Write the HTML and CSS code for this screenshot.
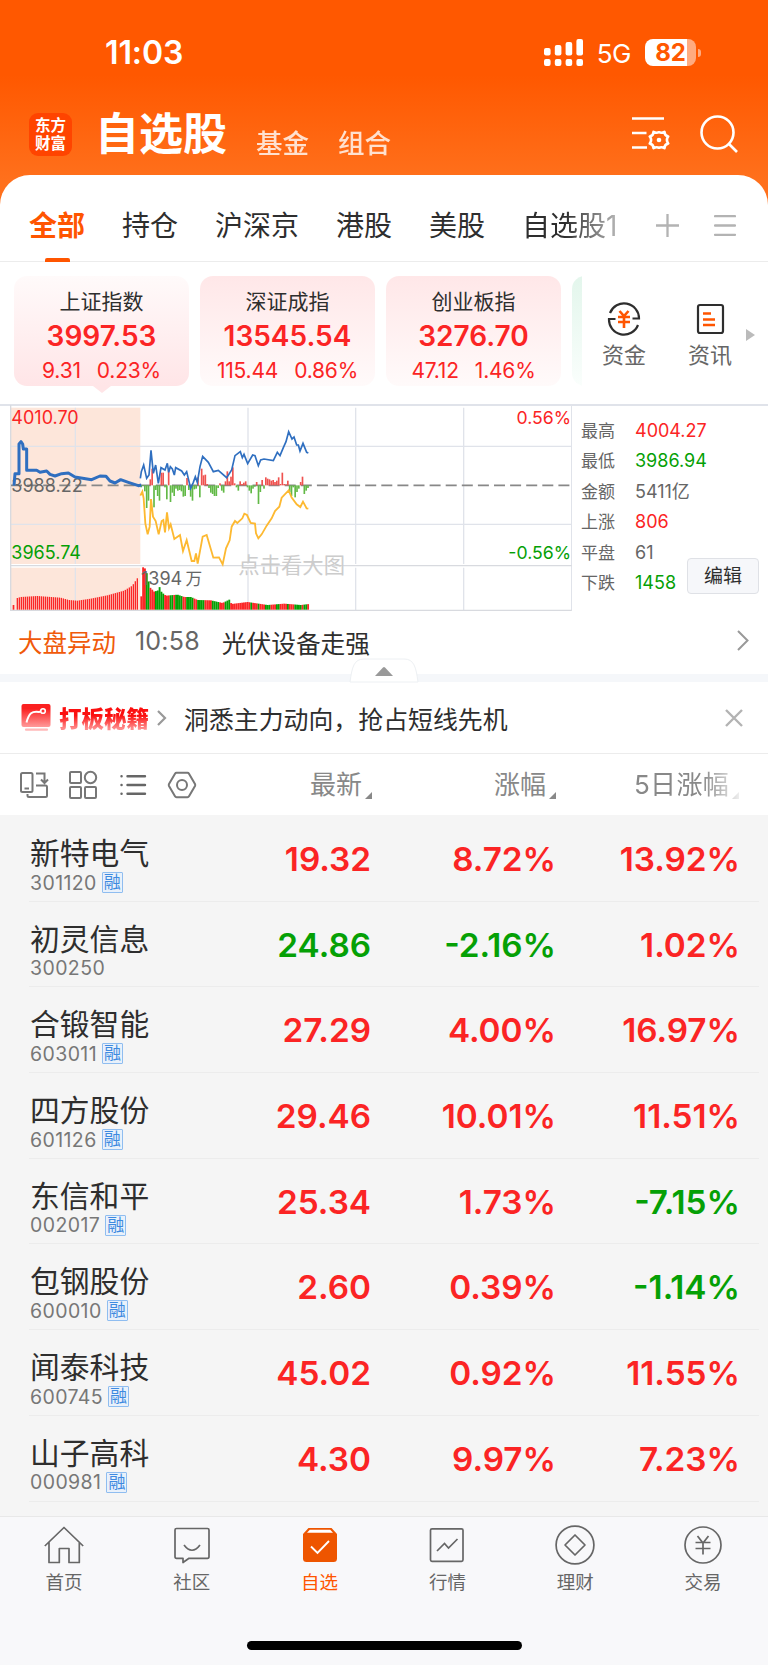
FILE: index.html
```html
<!DOCTYPE html>
<html lang="zh-CN">
<head>
    <meta charset="UTF-8">
    <meta name="viewport" content="width=device-width, initial-scale=1.0">
    <title>自选股</title>
    <link rel="stylesheet" href="styles.css">
</head>
<body>
    <div class="status-bar">
        <span class="time">11:03</span>
        <svg class="signal" width="39" height="27" viewBox="0 0 39 27" fill="#fff">
            <rect x="0" y="9" width="6.6" height="7.500" rx="2"/><rect x="0" y="20" width="6.600" height="7" rx="2"/>
            <rect x="10.800" y="6" width="6.600" height="10.500" rx="2"/><rect x="10.800" y="20" width="6.600" height="7" rx="2"/>
            <rect x="21.600" y="3" width="6.600" height="13.500" rx="2"/><rect x="21.600" y="20" width="6.600" height="7" rx="2"/>
            <rect x="32.400" y="0" width="6.600" height="16.500" rx="2"/><rect x="32.400" y="20" width="6.600" height="7" rx="2"/>
        </svg>
        <span class="network">5G</span>
        <span class="battery">82</span>
    </div>

    <header class="header">
        <div class="logo"><span>东方</span><span>财富</span></div>
        <h1>自选股</h1>
        <a class="head-link">基金</a>
        <a class="head-link">组合</a>
        <div class="head-icons">
            <svg width="38" height="36" viewBox="0 0 38 36" fill="none" stroke="#fff" stroke-width="2.600">
                <path d="M0 3.500H32M0 18H14.500M0 32.500H15"/>
                <path d="M21.500 16.800Q24.500 18.600 27 17.200Q29.500 18.600 32.500 16.800Q32.400 20.500 36.200 21.500Q33.600 25 36.200 28.500Q32.400 29.500 32.500 33.200Q29.500 31.400 27 32.800Q24.500 31.400 21.500 33.200Q21.600 29.500 17.800 28.500Q20.400 25 17.800 21.500Q21.600 20.500 21.500 16.800Z" stroke-linejoin="round"/>
                <circle cx="27" cy="25" r="2.300" fill="#fff" stroke="none"/>
            </svg>
            <svg width="38" height="38" viewBox="0 0 38 38" fill="none" stroke="#fff" stroke-width="2.600">
                <circle cx="17.500" cy="17.500" r="16"/>
                <path d="M28.500 28.500L37 37"/>
            </svg>
        </div>
    </header>

    <main class="panel">
        <nav class="tabs">
            <a class="tab active">全部</a>
            <a class="tab">持仓</a>
            <a class="tab">沪深京</a>
            <a class="tab">港股</a>
            <a class="tab">美股</a>
            <a class="tab faded">自选股1</a>
            <div class="tab-tools">
                <svg width="23" height="23" viewBox="0 0 23 23" stroke="#b3b3b3" stroke-width="2.300"><path d="M11.500 0V23M0 11.500H23"/></svg>
                <svg width="22" height="23" viewBox="0 0 22 23" stroke="#b3b3b3" stroke-width="2.300" stroke-linecap="round"><path d="M1 2.200H21M1 11.500H21M1 20.800H21"/></svg>
            </div>
        </nav>

        <section class="indexes">
            <div class="cards">
                <div class="card selected">
                    <div class="card-name">上证指数</div>
                    <div class="card-value">3997.53</div>
                    <div class="card-change"><span>9.31</span><span>0.23%</span></div>
                </div>
                <div class="card">
                    <div class="card-name">深证成指</div>
                    <div class="card-value">13545.54</div>
                    <div class="card-change"><span>115.44</span><span>0.86%</span></div>
                </div>
                <div class="card">
                    <div class="card-name">创业板指</div>
                    <div class="card-value">3276.70</div>
                    <div class="card-change"><span>47.12</span><span>1.46%</span></div>
                </div>
                <div class="card green"></div>
            </div>
            <div class="shortcuts">
                <a class="shortcut">
                    <svg width="34" height="34" viewBox="0 0 34 34" fill="none" stroke="#2e2e2e" stroke-width="2.200">
                        <path d="M3 11A15 15 0 0 1 32 16.500H25.500"/>
                        <path d="M31 23A15 15 0 0 1 2 17H8.500"/>
                        <path d="M12.500 9L17 14L21.500 9M11 15H23M11 20H23M17 14V26" stroke="#ff5500" stroke-width="2.600"/>
                    </svg>
                    <span>资金</span>
                </a>
                <a class="shortcut">
                    <svg width="34" height="34" viewBox="0 0 34 34" fill="none" stroke="#2e2e2e" stroke-width="2.200">
                        <rect x="5" y="3" width="25" height="28" rx="2"/>
                        <path d="M10 11.500H18M10 17.500H22M10 23H22" stroke="#ff5500" stroke-width="2.600"/>
                    </svg>
                    <span>资讯</span>
                </a>
                <i class="more"></i>
            </div>
        </section>

        <section class="market">
            <svg class="chart" id="chart" width="562" height="207" viewBox="30 27 1686 621">
                <rect x="33" y="38" width="388" height="469" fill="#fde6da"/>
                <rect x="33" y="518" width="388" height="127" fill="#fde6da"/>
                <g stroke="#e0e3ea" stroke-width="4" fill="none">
                    <path d="M226 38V507M744 38V507M1067 38V507M1391 38V507M226 518V645M744 518V645M1067 518V645M1391 518V645"/>
                    <path d="M32 154H1715M32 388H1715M1715 30V647"/>
                    <path d="M32 30V647M30 512H1715M30 646H1715" stroke="#d8dadf"/>
                </g>
                <path d="M33 271H1710" stroke="#888" stroke-width="5" stroke-dasharray="33 15.300"/>
                <g id="bars"></g>
                <text x="34" y="86" class="up">4010.70</text>
                <text x="34" y="290" class="flat">3988.22</text>
                <text x="34" y="491" class="down">3965.74</text>
                <text x="1713" y="86" class="up end">0.56%</text>
                <text x="1713" y="491" class="down end">-0.56%</text>
                <text x="423" y="569" class="flat">1394<tspan dx="10" class="cjk">万</tspan></text>
                <text x="715" y="535" class="hint">点击看大图</text>
                <polyline fill="none" stroke="#2f6fc0" stroke-width="9" stroke-linejoin="round" points="42,272 45,236 57,236 57,147 63,140 68,147 70,162 80,162 80,226 110,226 120,232 140,228 150,238 165,243 185,236 205,234 225,246 275,254 300,243 318,244 330,258 345,264 362,254 385,262 415,272 424,270"/>
                <polyline fill="none" stroke="#2f6fc0" stroke-width="5" points="421,250 424,230 431,210 440,250 447,240 453,166 460,235 467,210 475,265 483,218 495,225 502,205 506,232 511,215 517,222 523,240 527,218 545,228 553,240 560,230 572,280 580,262 586,245 592,262 600,215 608,184 625,202 640,230 655,226 680,248 695,225 705,182 721,170 727,188 732,178 743,206 758,180 765,182 775,212 782,195 792,192 820,197 832,172 840,182 850,158 858,140 866,110 876,132 882,126 890,150 895,150 900,168 909,145 920,172 925,174"/>
                <polyline fill="none" stroke="#fdb931" stroke-width="5.500" points="421,302 427,290 431,310 436,385 443,418 449,395 453,312 459,365 467,378 476,418 485,378 490,375 495,412 501,352 507,400 512,388 523,432 540,420 549,468 560,435 575,498 583,498 588,475 593,506 608,425 620,420 640,488 657,487 668,508 678,460 689,436 695,395 705,378 712,384 727,370 733,356 741,360 752,384 765,386 768,415 775,430 785,418 800,392 815,370 825,348 838,335 845,308 866,286 875,308 890,328 901,336 909,320 920,340 925,341"/>
            </svg>
            <dl class="stats">
                <dt>最高</dt><dd class="up">4004.27</dd>
                <dt>最低</dt><dd class="down">3986.94</dd>
                <dt>金额</dt><dd>5411亿</dd>
                <dt>上涨</dt><dd class="up">806</dd>
                <dt>平盘</dt><dd>61</dd>
                <dt>下跌</dt><dd class="down">1458</dd>
            </dl>
            <button class="edit">编辑</button>
        </section>

        <section class="news">
            <span class="news-tag">大盘异动</span>
            <span class="news-time">10:58</span>
            <span class="news-text">光伏设备走强</span>
            <svg width="12" height="21" viewBox="0 0 12 21" fill="none" stroke="#999" stroke-width="2"><path d="M1 1L10.500 10.500L1 20"/></svg>
            <div class="collapse">
                <svg width="70" height="25" viewBox="0 0 70 25">
                    <path d="M1 24C3 9 5 1 15 1H55C65 1 67 9 69 24Z" fill="#fff" stroke="#edf0f3"/>
                    <path d="M26 18L34 9.500Q35 8.500 36 9.500L44 18Z" fill="#999"/>
                </svg>
            </div>
        </section>

        <section class="promo">
            <svg width="30" height="29" viewBox="0 0 30 29" fill="none">
                <defs>
                    <linearGradient id="promoFill" x1="0" y1="0" x2="0" y2="1">
                        <stop offset=".2" stop-color="#fb2020"/><stop offset="1" stop-color="#ff9a9a"/>
                    </linearGradient>
                </defs>
                <rect x=".5" y="1" width="29" height="23" rx="2" fill="url(#promoFill)"/>
                <path d="M5.500 19.500C8 10 11 8 18 9L20 8.500" stroke="#fff" stroke-width="2"/>
                <circle cx="22" cy="8" r="2.300" stroke="#fff" stroke-width="1.600"/>
                <path d="M5 26.700H26" stroke="#ffb9b9" stroke-width="2.200" stroke-linecap="round"/>
            </svg>
            <span class="promo-title">打板秘籍</span>
            <svg class="promo-arrow" width="10" height="16" viewBox="0 0 10 16" fill="none" stroke="#999" stroke-width="2.200"><path d="M1 1L8 8L1 15"/></svg>
            <span class="promo-text">洞悉主力动向，抢占短线先机</span>
            <svg class="close" width="18" height="18" viewBox="0 0 18 18" stroke="#b3b3b3" stroke-width="2.400"><path d="M1 1L17 17M17 1L1 17"/></svg>
        </section>

        <section class="columns">
            <div class="views">
                <svg width="30" height="30" viewBox="0 0 30 30" fill="none" stroke="#777" stroke-width="2">
                    <rect x="2" y="3" width="11.500" height="19" rx="1.500"/><path d="M5.500 18.500H10"/>
                    <path d="M17 3.500H25.500V12M22 9.500L25.500 13L29 9.500M17 15.500H26.500Q28 15.500 28 17V25.500Q28 27 26.500 27H10Q8.500 27 8.500 25.500V24"/>
                </svg>
                <svg width="30" height="30" viewBox="0 0 30 30" fill="none" stroke="#777" stroke-width="2">
                    <rect x="2" y="2" width="11" height="11" rx="1"/><circle cx="22.500" cy="7.500" r="5.700"/>
                    <rect x="2" y="17" width="11" height="11" rx="1"/><rect x="17" y="17" width="11" height="11" rx="1"/>
                </svg>
                <svg width="30" height="30" viewBox="0 0 30 30" fill="none" stroke="#666" stroke-width="2.400" stroke-linecap="round">
                    <path d="M9.500 6.300H27M9.500 15H27M9.500 23.700H27M3.500 6.300H3.600M3.500 15H3.600M3.500 23.700H3.600"/>
                </svg>
                <svg width="30" height="30" viewBox="0 0 30 30" fill="none" stroke="#777" stroke-width="2">
                    <path d="M9.500 2.800H20.500Q21.500 2.800 22 3.700L28 14Q28.500 15 28 16L22 26.300Q21.500 27.200 20.500 27.200H9.500Q8.500 27.200 8 26.300L2 16Q1.500 15 2 14L8 3.700Q8.500 2.800 9.500 2.800Z"/><circle cx="15" cy="15" r="5"/>
                </svg>
            </div>
            <div class="col">最新<i></i></div>
            <div class="col">涨幅<i></i></div>
            <div class="col last">5日涨幅<i></i></div>
        </section>

        <section class="stocks">
            <div class="stock">
                <div><div class="name">新特电气</div><div class="code">301120<b>融</b></div></div>
                <span class="up">19.32</span><span class="up">8.72%</span><span class="up">13.92%</span>
            </div>
            <div class="stock">
                <div><div class="name">初灵信息</div><div class="code">300250</div></div>
                <span class="down">24.86</span><span class="down">-2.16%</span><span class="up">1.02%</span>
            </div>
            <div class="stock">
                <div><div class="name">合锻智能</div><div class="code">603011<b>融</b></div></div>
                <span class="up">27.29</span><span class="up">4.00%</span><span class="up">16.97%</span>
            </div>
            <div class="stock">
                <div><div class="name">四方股份</div><div class="code">601126<b>融</b></div></div>
                <span class="up">29.46</span><span class="up">10.01%</span><span class="up">11.51%</span>
            </div>
            <div class="stock">
                <div><div class="name">东信和平</div><div class="code">002017<b>融</b></div></div>
                <span class="up">25.34</span><span class="up">1.73%</span><span class="down">-7.15%</span>
            </div>
            <div class="stock">
                <div><div class="name">包钢股份</div><div class="code">600010<b>融</b></div></div>
                <span class="up">2.60</span><span class="up">0.39%</span><span class="down">-1.14%</span>
            </div>
            <div class="stock">
                <div><div class="name">闻泰科技</div><div class="code">600745<b>融</b></div></div>
                <span class="up">45.02</span><span class="up">0.92%</span><span class="up">11.55%</span>
            </div>
            <div class="stock">
                <div><div class="name">山子高科</div><div class="code">000981<b>融</b></div></div>
                <span class="up">4.30</span><span class="up">9.97%</span><span class="up">7.23%</span>
            </div>
        </section>
    </main>

    <footer class="bottom">
        <nav class="bottom-nav">
            <a>
                <svg width="40" height="40" viewBox="0 0 40 40" fill="none" stroke="#666" stroke-width="1.700" stroke-linejoin="round"><path d="M.8 21L20 2.500L39.200 21M5 17V37.500H15.300V23.500H25V37.500H35.300V17"/></svg>
                <span>首页</span>
            </a>
            <a>
                <svg width="40" height="40" viewBox="0 0 40 40" fill="none" stroke="#666" stroke-width="1.700" stroke-linejoin="round"><path d="M4.500 3.500H35.500Q37 3.500 37 5V31.500Q37 33.300 35.500 33.300H17L11 37.500V33.300H4.500Q3 33.300 3 31.500V5Q3 3.500 4.500 3.500Z"/><path d="M12 20Q20 30.500 28 20"/></svg>
                <span>社区</span>
            </a>
            <a class="active">
                <svg width="40" height="40" viewBox="0 0 40 40" fill="none"><path d="M8.500 3H31.500L37 9V33.500Q37 37 33.500 37H6.500Q3 37 3 33.500V9Z" fill="#ee5500"/><path d="M9.800 4.800H30.200L33 7.800H7Z" fill="#fff"/><path d="M11 21.500L17.500 28L29 16" stroke="#fff" stroke-width="1.900"/></svg>
                <span>自选</span>
            </a>
            <a>
                <svg width="40" height="40" viewBox="0 0 40 40" fill="none" stroke="#666" stroke-width="1.700"><rect x="3.500" y="3.800" width="32.500" height="32.500" rx="1.500"/><path d="M10 26L17.500 18.500L21.500 23L30.500 14"/></svg>
                <span>行情</span>
            </a>
            <a>
                <svg width="40" height="40" viewBox="0 0 40 40" fill="none" stroke="#666" stroke-width="1.700" stroke-linejoin="round"><circle cx="20" cy="20" r="18.900"/><path d="M20 10L30 20L20 30L10 20Z"/></svg>
                <span>理财</span>
            </a>
            <a>
                <svg width="40" height="40" viewBox="0 0 40 40" fill="none" stroke="#666" stroke-width="1.700"><circle cx="20" cy="20" r="18"/><path d="M14.500 11L20 18L25.500 11M12.500 17.500H27.500M12.500 23.500H27.500M20 17.500V29.500"/></svg>
                <span>交易</span>
            </a>
        </nav>
        <div class="home-indicator"></div>
    </footer>

    <script>
        const bars = document.getElementById('bars');
        const RED = '#fb2727';
        const GREEN = '#05a005';

        function addBar(x, y, width, height, color) {
            const rect = document.createElementNS('http://www.w3.org/2000/svg', 'rect');
            rect.setAttribute('x', x);
            rect.setAttribute('y', y);
            rect.setAttribute('width', width);
            rect.setAttribute('height', height);
            rect.setAttribute('fill', color);
            bars.appendChild(rect);
        }

        // 按关键点线性插值高度
        function heightAt(points, x) {
            for (let i = 1; i < points.length; i++) {
                const [x0, h0] = points[i - 1];
                const [x1, h1] = points[i];
                if (x <= x1) return h0 + (h1 - h0) * (x - x0) / (x1 - x0);
            }
            return points[points.length - 1][1];
        }

        // 多空柱：正数向上，负数向下
        const force = [-6, -2, -18, -68, -46, 18, 50, -66, -14, -32, -46, 38, 38, -6, -42, 46, -50, -22, -32, -10,
            -16, -14, -18, -34, -32, 22, -14, -34, -46, -12, -10, 24, -36, 50, 30, 32, 4, -8, -22, -26, -32, -32, -8, 6,
            -16, -22, 12, 42, 12, 26, 54, 6, -6, -16, 12, 4, 8, 12, -6, -16, -24, -10, -4, 10, -56, -20, 16, -10, 24, 20, 18,
            14, 16, 10, 14, 24, 4, 38, 4, 3, 14, -20, -32, -6, -36, -20, -10, 10, 26, -26, -16, -8];
        force.forEach((v, i) => {
            const x = 421 + i * 5.5;
            addBar(x, v > 0 ? 271 - v : 271, 5, Math.abs(v), v > 0 ? '#ef5350' : '#62b946');
        });

        // 集合竞价成交量
        addBar(38, 630, 5, 14, RED);
        const auction = [[50, 35], [60, 38], [110, 41], [180, 36], [205, 29], [230, 27], [270, 33], [320, 43], [370, 57], [395, 72], [416, 103]];
        for (let x = 50; x < 416; x += 6) {
            const h = heightAt(auction, x);
            addBar(x, 644 - h, 4, h, RED);
        }

        // 盘中成交量
        const volume = [[421, 40], [425, 128], [435, 122], [441, 92], [448, 66], [460, 54], [472, 58], [477, 70], [482, 52],
            [495, 42], [530, 45], [550, 38], [570, 38], [590, 29], [630, 28], [665, 20], [685, 30], [692, 17], [740, 23], [800, 14],
            [850, 18], [900, 14], [925, 17]];
        const colors = 'RRRGGRRRGGGGGRRRGGRGGGGRRGGGGRRGGGGRRRRGGGGRRRGGGRRRRRRRRRRRGRRRGRRRGGGRRRGGRRRRGRRRGGGGRGGRGG';
        for (let i = 0; i < 92; i++) {
            const x = 421 + i * 5.5;
            const h = heightAt(volume, x);
            addBar(x, 644 - h, 5.6, h, colors[i] === 'R' ? RED : GREEN);
        }
    </script>
</body>
</html>
```
FILE: styles.css
```css
:root {
    --orange: #ff5500;
    --up: #fb2424;
    --down: #05a005;
    --text: #2e2e2e;
    --gray: #666;
}

* {
    box-sizing: border-box;
    margin: 0;
    padding: 0;
}

body {
    width: 768px;
    height: 1665px;
    overflow: hidden;
    display: flex;
    flex-direction: column;
    font-family: Inter, "Noto Sans CJK SC", sans-serif;
    color: var(--text);
    background: linear-gradient(#ff5800 75px, #ff701c 180px);
}

svg {
    display: block;
    flex: none;
}

.up { color: var(--up); fill: var(--up); }
.down { color: var(--down); fill: var(--down); }

.status-bar {
    height: 104px;
    padding: 0 72px 0 105px;
    display: flex;
    align-items: center;
    color: #fff;
}

.time {
    flex: 1;
    font-size: 32px;
    font-weight: 600;
    letter-spacing: -0.1px;
}

.network {
    margin: 2px 14px 0 14px;
    font-size: 26px;
    letter-spacing: -0.5px;
}

.battery {
    position: relative;
    width: 51px;
    height: 27px;
    border-radius: 8px;
    background: linear-gradient(90deg, #fff 42px, #ffab80 42px);
    color: #ff5800;
    font-size: 24px;
    font-weight: 700;
    line-height: 28px;
    text-align: center;
}

.battery::after {
    content: '';
    position: absolute;
    right: -5px;
    top: 10px;
    width: 3px;
    height: 8px;
    border-radius: 0 3px 3px 0;
    background: #ffab80;
}

.header {
    height: 71px;
    padding: 0 30px 0 29px;
    display: flex;
    align-items: center;
    color: #fff;
}

.logo {
    width: 43px;
    height: 43px;
    margin-bottom: 11px;
    padding-top: 4px;
    border-radius: 9px;
    background: #ff4400;
    font-size: 15.5px;
    font-weight: 700;
    line-height: 18px;
    text-align: center;
}

.logo span {
    display: block;
}

h1 {
    margin: 0 0 11px 23px;
    font-size: 44px;
    font-weight: 700;
    line-height: 60px;
}

.head-link {
    margin: 3px 0 0 29px;
    font-size: 26.500px;
    font-weight: 500;
    opacity: 0.8;
}

.head-icons {
    display: flex;
    gap: 30px;
    margin: 0 0 12px auto;
}

.panel {
    flex: 1;
    background: #fff;
    border-radius: 30px 30px 0 0;
}

.tabs {
    height: 87px;
    padding: 0 32px 0 29px;
    display: flex;
    gap: 37px;
    border-bottom: 1px solid #ececec;
}

.tab {
    position: relative;
    font-size: 28px;
    line-height: 103px;
    white-space: nowrap;
}

.tab.active {
    color: var(--orange);
    font-weight: 700;
}

.tab.active::after {
    content: '';
    position: absolute;
    left: 16px;
    top: 83px;
    width: 25px;
    height: 4px;
    border-radius: 2px 2px 0 0;
    background: var(--orange);
}

.tab.faded {
    -webkit-mask-image: linear-gradient(90deg, #000 45%, rgba(0, 0, 0, 0.35));
    mask-image: linear-gradient(90deg, #000 45%, rgba(0, 0, 0, 0.35));
}

.tab-tools {
    display: flex;
    align-items: center;
    gap: 35px;
    margin-left: auto;
    padding-top: 15px;
}

.indexes {
    height: 142px;
    padding: 14px 0 0 14px;
    display: flex;
}

.cards {
    width: 568px;
    height: 118px;
    display: flex;
    gap: 11px;
    overflow: hidden;
}

.card {
    position: relative;
    flex: none;
    width: 175px;
    height: 110px;
    border-radius: 13px;
    background: linear-gradient(#ffe7e8, #fffafa);
    text-align: center;
}

.card.selected {
    background: linear-gradient(#fffafa, #ffe5e7);
}

.card.selected::after {
    content: '';
    position: absolute;
    left: 79px;
    top: 110px;
    border: 9px solid transparent;
    border-top: 7px solid #ffe5e7;
    border-bottom: 0;
}

.card.green {
    background: linear-gradient(#e3f6ec, #fafefc);
}

.card-name {
    padding-top: 10px;
    font-size: 21px;
    line-height: 32px;
}

.card-value {
    color: var(--up);
    font-size: 28px;
    font-weight: 600;
    line-height: 37px;
}

.card-change {
    display: flex;
    justify-content: center;
    gap: 16px;
    color: var(--up);
    font-size: 21px;
    line-height: 32px;
    letter-spacing: -0.2px;
}

.shortcuts {
    flex: 1;
    display: flex;
    align-items: flex-start;
    padding: 26px 0 0 19px;
}

.shortcut {
    width: 46px;
    margin-right: 40px;
    display: flex;
    flex-direction: column;
    align-items: center;
    color: #666;
    font-size: 22px;
    line-height: 39px;
    white-space: nowrap;
}

.more {
    margin: 27px 0 0 -27px;
    border: 6px solid transparent;
    border-left: 9px solid #bbb;
    border-right: 0;
}

.market {
    position: relative;
    height: 208px;
    padding-left: 10px;
    display: flex;
    border-top: 2px solid #e0e3ea;
}

.chart {
    margin-top: -2px;
}

.chart text {
    font-size: 54px;
}

.chart .end {
    font-size: 53px;
    text-anchor: end;
}

.chart .flat {
    fill: #666;
}

.chart .cjk {
    font-size: 50px;
}

.chart .hint {
    font-size: 64px;
    fill: #ccc;
}

.stats {
    padding: 10px 0 0 9px;
    display: grid;
    grid-template-columns: 54px auto;
    grid-auto-rows: 30.4px;
    align-content: start;
    color: var(--gray);
    font-size: 18px;
    line-height: 30px;
}

.stats dt {
    font-size: 17px;
}

.edit {
    position: absolute;
    right: 9px;
    top: 152px;
    width: 72px;
    height: 36px;
    border: 1px solid #dfe1e6;
    border-radius: 4px;
    background: #f6f7fa;
    color: var(--text);
    font-family: inherit;
    font-size: 19px;
    line-height: 33px;
}

.news {
    position: relative;
    height: 70px;
    padding: 0 19px 4px 18px;
    display: flex;
    align-items: center;
    border-bottom: 8px solid #f5f7fa;
    font-size: 24.5px;
}

.news-tag {
    color: #f05a0a;
}

.news-time {
    margin: 0 22px 0 19px;
    color: var(--gray);
    font-size: 25px;
    letter-spacing: 0.2px;
}

.news-text {
    padding-top: 2px;
    font-size: 24.7px;
}

.news > svg {
    margin: 0 0 1px auto;
}

.collapse {
    position: absolute;
    left: 349px;
    bottom: -9px;
}

.promo {
    height: 72px;
    padding: 0 25px 0 21px;
    display: flex;
    align-items: center;
    border-bottom: 1px solid #ececec;
}

.promo-title {
    margin: 0 0 2px 8px;
    font-size: 22.5px;
    font-weight: 900;
    background: linear-gradient(#fb1010 45%, #ff8a8a 85%);
    -webkit-background-clip: text;
    background-clip: text;
    color: transparent;
}

.promo-arrow {
    margin: 0 17px 0 8px;
}

.promo-text {
    font-size: 24.9px;
}

.close {
    margin-left: auto;
}

.columns {
    height: 61px;
    padding: 1px 0 0 19px;
    display: grid;
    grid-template-columns: 192px 161px 184px 183px;
    align-items: center;
}

.views {
    display: flex;
    gap: 19.4px;
}

.col {
    display: flex;
    justify-content: flex-end;
    color: #888;
    font-size: 26px;
    line-height: 36px;
    white-space: nowrap;
}

.col i {
    align-self: flex-end;
    margin: 0 0 4px 3px;
    border-left: 7px solid transparent;
    border-bottom: 7px solid #888;
}

.col.last {
    letter-spacing: 0.3px;
    -webkit-mask-image: linear-gradient(90deg, #000 80%, rgba(0, 0, 0, 0.15));
    mask-image: linear-gradient(90deg, #000 80%, rgba(0, 0, 0, 0.15));
}

.stocks {
    height: 701px;
    padding: 1px 9px 0 29px;
    background: #f5f5f5;
}

.stock {
    height: 85.7px;
    display: grid;
    grid-template-columns: 159px 184px 184.5px 184px;
    justify-content: start;
    grid-template-columns: 158px 184px 185px 184px;
    border-bottom: 1px solid #ececec;
    text-align: right;
}

.stock > div {
    padding: 17px 0 0 1px;
    text-align: left;
}

.stock > span {
    font-size: 33.3px;
    font-weight: 600;
    line-height: 86px;
}

.name {
    font-size: 29.8px;
    line-height: 40px;
    white-space: nowrap;
}

.code {
    display: flex;
    align-items: center;
    height: 19px;
    color: #777;
    font-size: 19.5px;
    letter-spacing: 0.4px;
}

.code b {
    width: 21px;
    height: 21px;
    margin-left: 5px;
    border: 1px solid #8fbdf0;
    border-radius: 1px;
    background: #e9f1fb;
    color: #3e8ae0;
    font-size: 17px;
    font-weight: 400;
    line-height: 18px;
    letter-spacing: 0;
    text-align: center;
}

.bottom {
    height: 149px;
    border-top: 1px solid #e8e8e8;
    background: #f8f8fa;
}

.bottom-nav {
    display: flex;
    padding: 8px 1px 0 0;
}

.bottom-nav a {
    flex: 1;
    display: flex;
    flex-direction: column;
    align-items: center;
    color: #666;
    font-size: 18.5px;
    line-height: 34px;
}

.bottom-nav a.active {
    color: var(--orange);
}

.home-indicator {
    width: 275px;
    height: 9px;
    margin: 42px auto 0;
    border-radius: 5px;
    background: #000;
}
```
